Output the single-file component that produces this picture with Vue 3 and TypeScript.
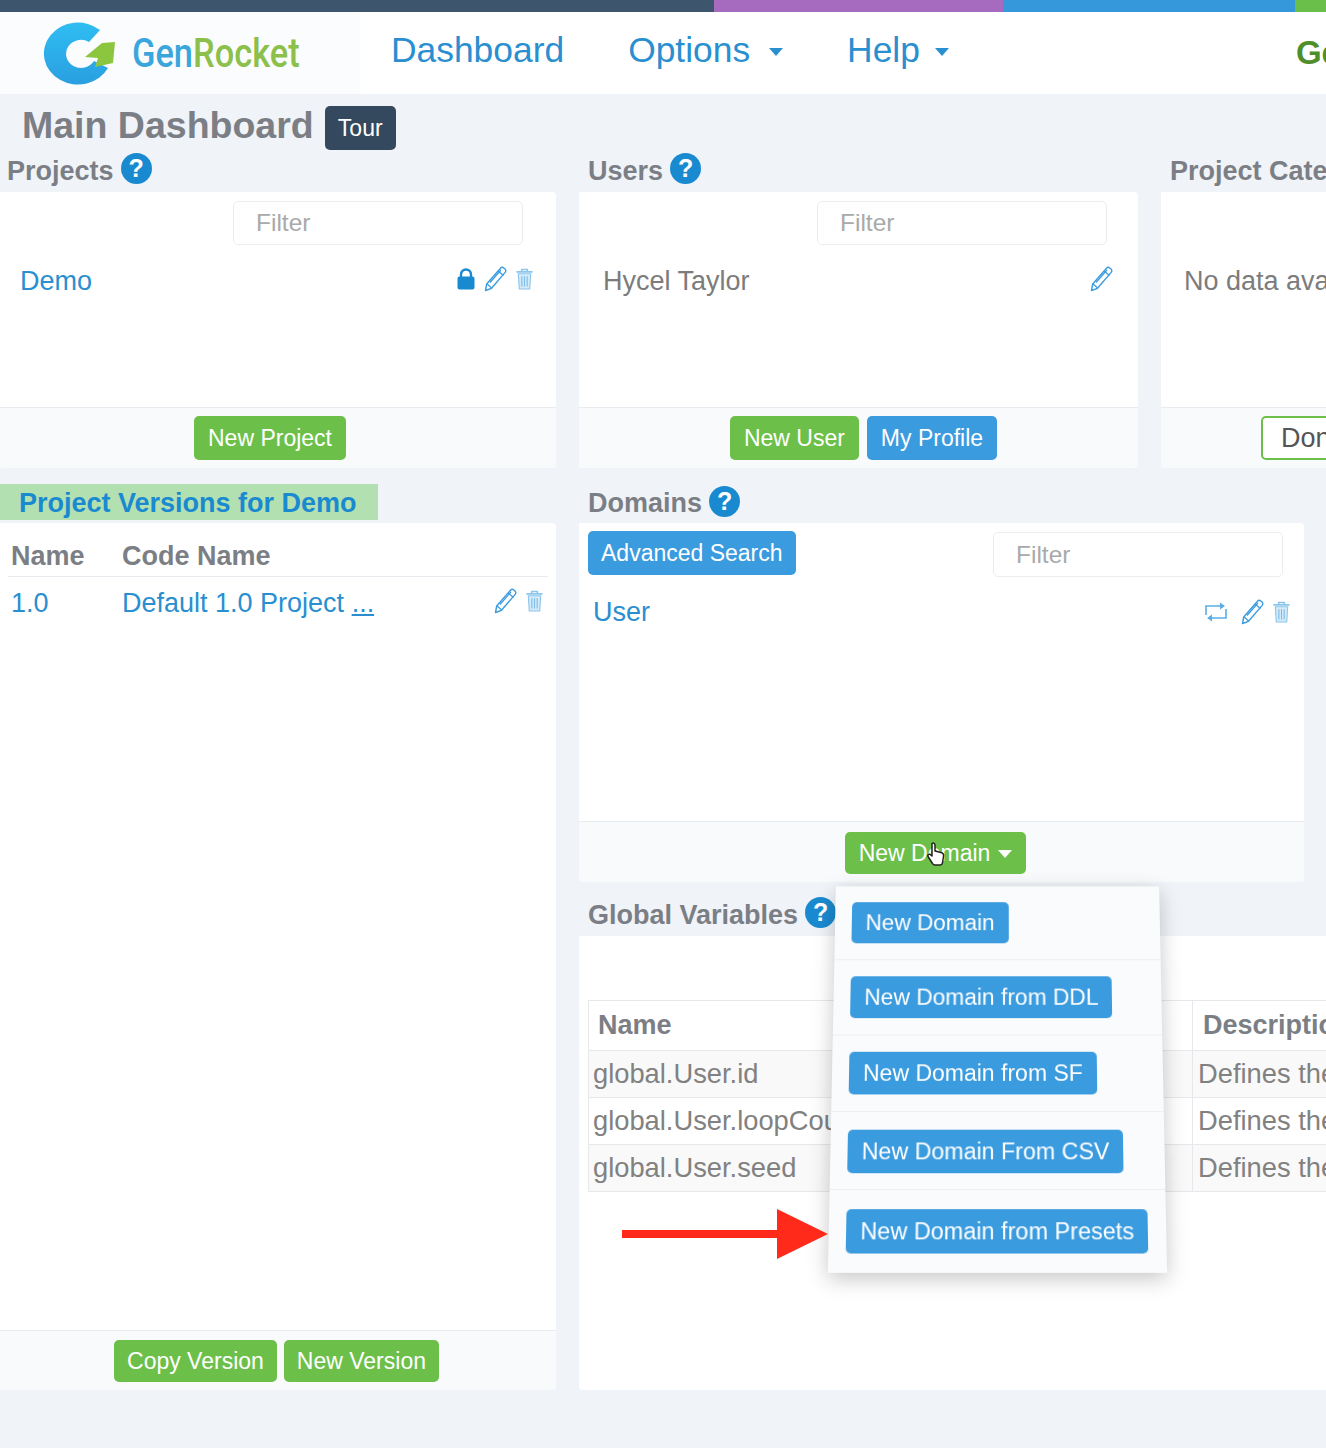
<script setup lang="ts">
interface GlobalVar {
  name: string;
  description: string;
}

const stripes: string[] = ["#3d566e", "#a66bbe", "#3498db", "#6abf4b"];

const menuItems: string[] = [
  "New Domain",
  "New Domain from DDL",
  "New Domain from SF",
  "New Domain From CSV",
  "New Domain from Presets"
];

const globals: GlobalVar[] = [
  { name: "global.User.id", description: "Defines the id attribute" },
  { name: "global.User.loopCount", description: "Defines the loop count" },
  { name: "global.User.seed", description: "Defines the seed value" }
];
</script>

<template>
  <div class="page">
    <svg class="defs" width="0" height="0">
      <symbol id="pencil" viewBox="0 0 24 26">
        <path d="M2.5 24.5l1.2-6.5L17.5 2.2a2.4 2.4 0 0 1 3.3-.2l1.2 1a2.4 2.4 0 0 1 .2 3.4L8.5 22.3z" fill="#fff" stroke="#3b9bdf" stroke-width="1.4" stroke-linejoin="round" />
        <path d="M15.2 5l5.2 4.5M4 17.8l4.5 4.2M7 16.5L18 4" fill="none" stroke="#3b9bdf" stroke-width="1.2" />
      </symbol>
      <symbol id="trash" viewBox="0 0 20 24">
        <path d="M1.5 4.5h17M7 4.5V2h6v2.5" fill="none" stroke="#8cc6ec" stroke-width="1.6" />
        <path d="M3.5 6.5h13l-1 16h-11z" fill="#d6ebf8" stroke="#8cc6ec" stroke-width="1.2" />
        <path d="M7.2 9v11M10 9v11M12.8 9v11" fill="none" stroke="#7dbce8" stroke-width="1.2" />
      </symbol>
      <symbol id="lock" viewBox="0 0 18 22">
        <path d="M4 9V6.500a5 5 0 0 1 10 0V9" fill="none" stroke="#1a8ad0" stroke-width="2.400" />
        <rect x="0.500" y="8.500" width="17" height="13" rx="2" fill="#1a8ad0" />
      </symbol>
      <symbol id="loop" viewBox="0 0 24 20">
        <path d="M17 4H2v9M7 16h15V7" fill="none" stroke="#5aaee6" stroke-width="1.600" />
        <path d="M16 0.500l5 3.500-5 3.500zM8 12.500l-5 3.500 5 3.500z" fill="#5aaee6" />
      </symbol>
    </svg>

    <div class="stripes">
      <span v-for="color in stripes" :key="color" :style="{ background: color }"></span>
    </div>

    <header class="nav">
      <div class="brand">
        <svg class="brand-mark" viewBox="0 0 80 66" width="80" height="66">
          <defs>
            <linearGradient id="ring" x1="0" y1="0" x2="0" y2="1">
              <stop offset="0" stop-color="#2fbdf2" />
              <stop offset="1" stop-color="#2a9fe0" />
            </linearGradient>
          </defs>
          <path d="M61 11A34 31 0 1 0 69 49L55 42A15 14 0 1 1 50 23z" fill="url(#ring)" />
          <path d="M63 24L76 23L74 44L56 48L59 39L46 38z" fill="#8cc63f" />
        </svg>
        <span class="brand-name"><span class="gen">Gen</span><span class="rocket">Rocket</span></span>
      </div>
      <nav class="links">
        <a>Dashboard</a>
        <a>Options<i class="caret"></i></a>
        <a>Help<i class="caret caret-help"></i></a>
        <b class="account">GenRocket</b>
      </nav>
    </header>

    <div class="title-row">
      <h1>Main Dashboard</h1>
      <span class="tour">Tour</span>
    </div>

    <section class="top-row">
      <div>
        <h2 class="heading">Projects <i class="help">?</i></h2>
        <div class="panel">
          <div class="panel-body">
            <div class="filter-line filter-a"><input class="filter" placeholder="Filter" /></div>
            <div class="row row-a">
              <a class="link">Demo</a>
              <span class="icons">
                <svg class="ic-lock"><use href="#lock" /></svg>
                <svg class="ic-pencil"><use href="#pencil" /></svg>
                <svg class="ic-trash"><use href="#trash" /></svg>
              </span>
            </div>
          </div>
          <div class="panel-foot foot-projects">
            <button class="btn green">New Project</button>
          </div>
        </div>
      </div>

      <div>
        <h2 class="heading">Users <i class="help">?</i></h2>
        <div class="panel">
          <div class="panel-body">
            <div class="filter-line filter-b"><input class="filter" placeholder="Filter" /></div>
            <div class="row row-b">
              <span class="plain">Hycel Taylor</span>
              <span class="icons">
                <svg class="ic-pencil"><use href="#pencil" /></svg>
              </span>
            </div>
          </div>
          <div class="panel-foot foot-users">
            <button class="btn green">New User</button>
            <button class="btn blue">My Profile</button>
          </div>
        </div>
      </div>

      <div>
        <h2 class="heading">Project Categories</h2>
        <div class="panel">
          <div class="panel-body">
            <div class="filter-line"></div>
            <div class="row row-c">
              <span class="plain">No data available</span>
            </div>
          </div>
          <div class="panel-foot foot-start">
            <button class="btn outline">Done</button>
          </div>
        </div>
      </div>
    </section>

    <section class="bottom-row">
      <div class="versions">
        <h2 class="versions-title">Project Versions for Demo</h2>
        <div class="panel versions-panel">
          <div class="versions-body">
            <div class="versions-head">
              <span class="col-name">Name</span>
              <span>Code Name</span>
            </div>
            <div class="versions-line">
              <a class="link col-name">1.0</a>
              <a class="link">Default 1.0 Project <u>...</u></a>
              <span class="icons">
                <svg class="ic-pencil"><use href="#pencil" /></svg>
                <svg class="ic-trash"><use href="#trash" /></svg>
              </span>
            </div>
          </div>
          <div class="panel-foot">
            <button class="btn green">Copy Version</button>
            <button class="btn green">New Version</button>
          </div>
        </div>
      </div>

      <div class="right-col">
        <h2 class="heading heading-domains">Domains <i class="help">?</i></h2>
        <div class="panel domains-panel">
          <div class="domains-body">
            <div class="domains-tools">
              <button class="btn blue">Advanced Search</button>
              <input class="filter" placeholder="Filter" />
            </div>
            <div class="row row-d">
              <a class="link">User</a>
              <span class="icons">
                <svg class="ic-loop"><use href="#loop" /></svg>
                <svg class="ic-pencil"><use href="#pencil" /></svg>
                <svg class="ic-trash"><use href="#trash" /></svg>
              </span>
            </div>
          </div>
          <div class="panel-foot foot-domains">
            <button class="btn green">New Domain<i class="caret caret-white"></i></button>
          </div>
        </div>

        <h2 class="heading heading-globals">Global Variables <i class="help">?</i></h2>
        <div class="panel globals-panel">
          <table class="globals">
            <colgroup>
              <col class="col-first" />
              <col />
            </colgroup>
            <thead>
              <tr>
                <th>Name</th>
                <th>Description</th>
              </tr>
            </thead>
            <tbody>
              <tr v-for="item in globals" :key="item.name">
                <td>{{ item.name }}</td>
                <td>{{ item.description }}</td>
              </tr>
            </tbody>
          </table>
        </div>
      </div>
    </section>

    <!-- open dropdown, slightly tilted like the video frame it came from -->
    <div class="menu">
      <div v-for="item in menuItems" :key="item" class="menu-item">
        <button class="btn blue">{{ item }}</button>
      </div>
    </div>

    <svg class="cursor" viewBox="0 0 20 26" width="20" height="26">
      <path d="M6 2.500c1.500-1 3 0 3 1.500v6l6 1.500c2 .5 3 1.500 2.500 4l-1 6c-.2 1.500-1 2.500-2.500 2.500H9c-1 0-2-.5-2.500-1.500L2 15.500c-.8-1.500 1-3 2.500-1.800L6 15z" fill="#fff" stroke="#222" stroke-width="1.500" stroke-linejoin="round" />
    </svg>

    <svg class="arrow" viewBox="0 0 206 50" width="206" height="50">
      <path d="M0 21H155V0L206 25L155 50V29H0z" fill="#ff2a1a" />
    </svg>
  </div>
</template>

<style scoped>
.page {
  position: relative;
  width: 1326px;
  height: 1448px;
  overflow: hidden;
  background: #f0f3f8;
  font-family: "Liberation Sans", Arial, sans-serif;
  color: #7b7f85;
  filter: blur(0.4px);
}

.defs {
  position: absolute;
}

.stripes {
  display: grid;
  grid-template-columns: 714px 289px 292px 31px;
  height: 12px;
}

.nav {
  display: flex;
  height: 82px;
  background: #fff;
}

.brand {
  display: flex;
  flex: none;
  width: 360px;
  padding-left: 39px;
  box-sizing: border-box;
  align-items: center;
  background: #fbfcfd;
}

.brand-mark {
  flex: none;
  margin-top: -2px;
}

.brand-name {
  display: inline-block;
  margin-left: 13px;
  font-family: Roboto, sans-serif;
  font-size: 40px;
  font-weight: 500;
  white-space: nowrap;
  transform: scaleX(0.86);
  transform-origin: left center;
}

.gen {
  color: #3aa6dc;
}

.rocket {
  color: #8cc04b;
}

.links {
  display: flex;
  align-items: center;
  gap: 64px;
  height: 76px;
  margin-left: 31px;
  font-size: 35.400px;
  color: #2a8fd0;
  white-space: nowrap;
}

.account {
  margin-left: 283px;
  margin-top: 6px;
  font-size: 33px;
  color: #4f8f2b;
}

.caret {
  display: inline-block;
  margin-left: 19px;
  vertical-align: middle;
  border-top: 8px solid #2a8fd0;
  border-left: 7.500px solid transparent;
  border-right: 7.500px solid transparent;
}

.caret-help {
  margin-left: 15px;
}

.caret-white {
  margin-left: 8px;
  border-top-color: #fff;
}

.title-row {
  display: flex;
  align-items: center;
  gap: 11px;
  height: 44px;
  padding: 12px 0 0 22px;
}

h1 {
  margin: 0;
  font-size: 37.500px;
  font-weight: 700;
  line-height: 44px;
  position: relative;
  top: -3px;
}

.tour {
  display: flex;
  align-items: center;
  justify-content: center;
  width: 71px;
  height: 44px;
  border-radius: 5px;
  background: #34495e;
  color: #fff;
  font-size: 23px;
}

.top-row {
  display: grid;
  grid-template-columns: 556px 559px 400px;
  gap: 23px;
}

.heading {
  display: flex;
  align-items: center;
  gap: 7px;
  height: 42px;
  margin: 0;
  padding-left: 7px;
  font-size: 27px;
  font-weight: 700;
  white-space: nowrap;
}

.top-row > div + div .heading {
  padding-left: 9px;
}

.help {
  display: flex;
  flex: none;
  align-items: center;
  justify-content: center;
  width: 31px;
  height: 31px;
  margin-top: -5px;
  border-radius: 50%;
  background: #1a8ad0;
  color: #fff;
  font-size: 25px;
  font-style: normal;
  font-weight: 700;
}

.panel {
  overflow: hidden;
  border-radius: 0 4px 4px 4px;
  background: #fff;
}

.panel-body {
  height: 215px;
  box-sizing: border-box;
  padding-top: 9px;
}

.panel-foot {
  display: flex;
  justify-content: center;
  gap: 8px;
  height: 61px;
  padding-top: 8px;
  box-sizing: border-box;
  border-top: 1px solid #e8ebef;
  background: #f8fafc;
}

.foot-projects {
  padding-right: 16px;
}

.foot-users {
  padding-left: 10px;
}

.foot-domains {
  padding-top: 10px;
  padding-right: 12px;
}

.foot-start {
  justify-content: flex-start;
  padding-left: 100px;
}

.filter-line {
  display: flex;
  justify-content: flex-end;
  height: 44px;
}

.filter-a {
  padding-right: 33px;
}

.filter-b {
  padding-right: 31px;
}

.filter {
  width: 290px;
  height: 44px;
  padding: 0 0 0 22px;
  box-sizing: border-box;
  border: 1px solid #eaedf0;
  border-radius: 5px;
  background: #fff;
  font-family: inherit;
  font-size: 24.500px;
  outline: none;
}

.filter::placeholder {
  color: #a9a9a9;
  opacity: 1;
}

.row {
  display: flex;
  align-items: center;
  height: 40px;
  margin-top: 16px;
  font-size: 27px;
}

.row-a {
  padding: 0 22px 0 20px;
}

.row-b {
  padding: 0 25px 0 24px;
}

.row-c {
  padding-left: 23px;
  white-space: nowrap;
}

.link {
  color: #2a8fd0;
}

.plain {
  color: #7c7c7c;
}

.icons {
  display: flex;
  align-items: center;
  gap: 8px;
  margin-left: auto;
  margin-top: -4px;
}

.ic-lock {
  width: 18px;
  height: 22px;
}

.ic-pencil {
  width: 24px;
  height: 26px;
}

.ic-trash {
  width: 19px;
  height: 24px;
}

.ic-loop {
  width: 24px;
  height: 20px;
  margin-right: 4px;
}

.btn {
  height: 44px;
  padding: 0 14px;
  border: 0;
  border-radius: 5px;
  color: #fff;
  font-family: inherit;
  font-size: 23px;
  white-space: nowrap;
}

.green {
  background: #6cc04a;
}

.blue {
  background: #3b9bdf;
}

.outline {
  width: 120px;
  padding: 0 0 0 18px;
  border: 2px solid #6cc04a;
  background: #fff;
  color: #555;
  font-size: 27px;
  text-align: left;
}

.bottom-row {
  display: grid;
  grid-template-columns: 556px 1fr;
  gap: 23px;
  margin-top: 16px;
}

.versions-title {
  width: 378px;
  height: 36px;
  margin: 0 0 3px;
  padding-left: 19px;
  box-sizing: border-box;
  background: #b3e0b0;
  color: #1a8ad0;
  font-size: 27px;
  font-weight: 700;
  line-height: 38px;
  white-space: nowrap;
}

.versions-panel {
  display: flex;
  flex-direction: column;
  height: 867px;
}

.versions-body {
  flex: 1;
  padding: 13px 8px 0;
  font-size: 27px;
}

.versions-head {
  display: flex;
  align-items: center;
  height: 40px;
  border-bottom: 1px solid #e8ebef;
  font-weight: 700;
}

.col-name {
  width: 114px;
  padding-left: 3px;
  box-sizing: border-box;
}

.versions-line {
  display: flex;
  align-items: center;
  height: 52px;
  padding-right: 4px;
}

.versions-panel .panel-foot {
  height: 60px;
  gap: 7px;
  padding: 9px 3px 0 0;
}

.versions-panel .btn {
  height: 42px;
  padding: 0 13px;
}

.right-col {
  min-width: 0;
  overflow: hidden;
  margin-right: -120px;
}

.heading-domains {
  height: 39px;
  padding-left: 9px;
}

.domains-panel {
  display: flex;
  flex-direction: column;
  width: 725px;
  height: 359px;
}

.domains-body {
  flex: 1;
  padding: 8px 21px 0 9px;
}

.domains-tools {
  display: flex;
  align-items: flex-start;
  justify-content: space-between;
}

.domains-tools .btn {
  padding: 0 13px;
}

.domains-tools .filter {
  height: 45px;
  margin-top: 1px;
}

.domains-panel .panel-foot .btn {
  height: 42px;
}

.row-d {
  margin: 15px -8px 0 0;
  padding-left: 5px;
}

.row-d .icons {
  margin-top: 0;
}

.heading-globals {
  height: 54px;
  padding: 12px 0 0 9px;
  box-sizing: border-box;
}

.globals-panel {
  height: 454px;
  padding: 64px 0 0 9px;
  box-sizing: border-box;
}

.globals {
  width: 1000px;
  table-layout: fixed;
  border-collapse: collapse;
  font-size: 27.300px;
}

.col-first {
  width: 604px;
}

.globals th,
.globals td {
  padding: 0 0 0 5px;
  border: 1px solid #e6e8eb;
  text-align: left;
  white-space: nowrap;
  overflow: hidden;
}

.globals th {
  height: 49px;
  padding-left: 10px;
  font-size: 27px;
}

.globals th:first-child {
  padding-left: 9px;
}

.globals td {
  height: 46px;
  color: #818181;
}

.globals td:first-child {
  padding-left: 4px;
}

.globals tbody tr:nth-child(odd) {
  background: #f9f9f9;
}

.menu {
  position: absolute;
  top: 876px;
  left: 832px;
  width: 331px;
  background: #fafbfc;
  box-shadow: 0 6px 20px rgba(0, 0, 0, 0.22);
  transform: perspective(2000px) rotateX(14deg);
}

.menu-item {
  height: 79px;
  padding: 17px 0 0 17px;
  box-sizing: border-box;
  border-bottom: 1px solid #eceef1;
}

.menu-item:nth-child(4) {
  padding-top: 18px;
}

.menu-item:last-child {
  height: 82px;
  padding-top: 19px;
  border-bottom: 0;
}

.cursor {
  position: absolute;
  top: 841px;
  left: 926px;
}

.arrow {
  position: absolute;
  top: 1209px;
  left: 622px;
}
</style>
